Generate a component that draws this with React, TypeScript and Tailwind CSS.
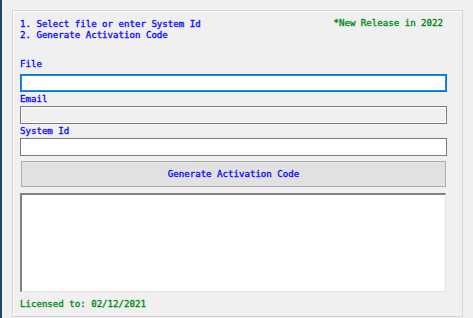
import React from "react";

const mono = "font-['DejaVu_Sans_Mono','Liberation_Mono',monospace] text-[9.1px] leading-[11px] [-webkit-text-stroke:0.35px]";

function Label({ text, className = "" }: { text: string; className?: string }) {
    return <div className={`${mono} text-[#0d0dff] ${className}`}>{text}</div>;
}

export default function App() {
    return (
        <div className="flex w-[473px] h-[318px] bg-[#f0f0f0] overflow-hidden">
            <div className="w-[2px] h-full bg-[#1d4a64]" />
            <div className="ml-[10px] mt-[10px] w-[451px] h-[307px] border border-[#d5d5d5] shadow-[inset_1px_1px_0_#ffffff] flex flex-col pl-[7px] pr-[15px]">
                <div className="flex justify-between pt-[8px]">
                    <div className={`${mono} text-[#0d0dff]`}>
                        <div>1. Select file or enter System Id</div>
                        <div>2. Generate Activation Code</div>
                    </div>
                    <div className={`${mono} text-[#008a14] mt-[-1px] mr-[4px]`}>*New Release in 2022</div>
                </div>

                <Label text="File" className="mt-[18px]" />
                <div className="mt-[4px] h-[18px] bg-white border border-[#0078d7] shadow-[inset_0_0_0_1px_#2a86d8]" />

                <Label text="Email" className="mt-[2px]" />
                <div className="mt-[1px] h-[18px] bg-[#f0f0f0] border border-[#7a7a7a] shadow-[inset_0_0_0_1px_#ffffff]" />

                <Label text="System Id" className="mt-[2px]" />
                <div className="mt-[1px] h-[18px] bg-white border border-[#7a7a7a]" />

                <button className="mt-[5px] mx-[1px] h-[26px] bg-[#e1e1e1] border border-[#adadad] flex items-center justify-center">
                    <span className={`${mono} text-[#0d0dff]`}>Generate Activation Code</span>
                </button>

                <div className="mt-[6px] mr-[1px] h-[99px] bg-white border-t-2 border-l-2 border-b border-r border-t-[#808080] border-l-[#808080] border-b-[#e3e3e3] border-r-[#e3e3e3]" />

                <div className={`${mono} text-[#008a14] mt-[7px]`}>Licensed to: 02/12/2021</div>
            </div>
        </div>
    );
}
